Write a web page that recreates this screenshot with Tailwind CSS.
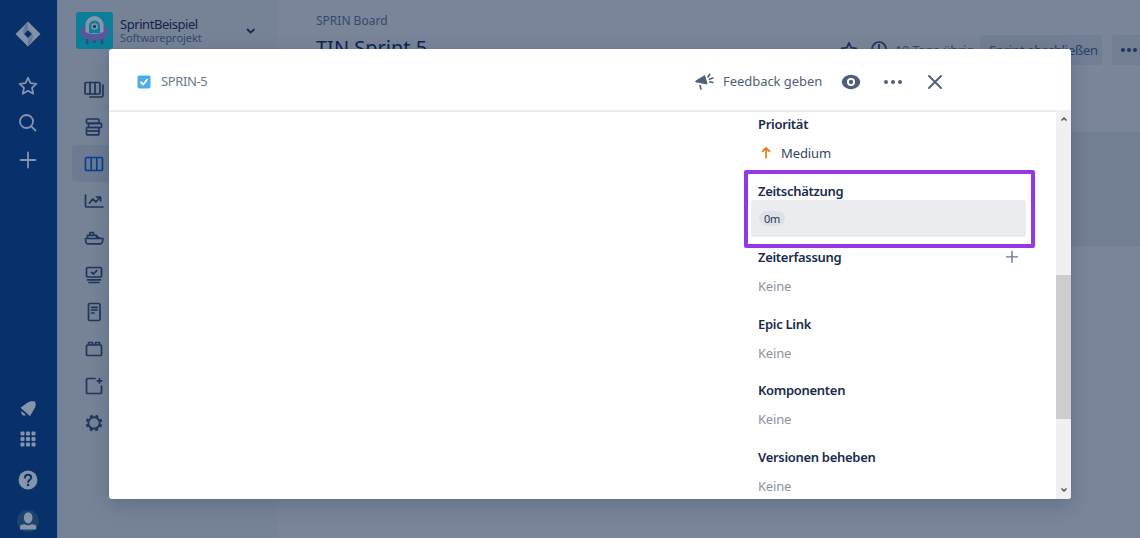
<!DOCTYPE html>
<html lang="de">
<head>
<meta charset="utf-8">
<title>SPRIN-5</title>
<script src="https://cdn.jsdelivr.net/npm/@tailwindcss/browser@4"></script>
</head>
<body class="relative flex h-[538px] w-[1140px] overflow-hidden bg-[#7a8599] font-['Noto_Sans',sans-serif] text-[13px] text-[#34456a]">

<!-- Global navigation -->
<nav class="flex h-full w-[57px] shrink-0 flex-col items-center bg-[#08306b] pr-[2px] text-[#8593ab]">
  <svg class="mt-[21px] h-[26px] w-[26px] shrink-0" viewBox="0 0 26 26"><path d="M13 .5 25.5 13 13 25.5 .5 13Z M13 9 9 13l4 4 4-4Z" fill="#8491a6" fill-rule="evenodd"/><path d="M13 .8v8.2L9 13c-2-3 0-8 4-12.200ZM13 25.200V17l4-4c2 3 0 8-4 12.200Z" fill="#56709a" opacity=".7"/></svg>
  <svg class="mt-[29px] h-5 w-5 shrink-0" viewBox="0 0 20 20" fill="none" stroke="currentColor" stroke-width="1.800" stroke-linejoin="round"><path d="m10 1.800 2.500 5.400 5.800.7-4.300 4 1.200 5.800-5.200-2.900-5.200 2.900 1.200-5.800-4.300-4 5.800-.7Z"/></svg>
  <svg class="mt-[17px] h-5 w-5 shrink-0" viewBox="0 0 20 20" fill="none" stroke="currentColor" stroke-width="1.800" stroke-linecap="round"><circle cx="8.500" cy="8.500" r="6.500"/><path d="m13.300 13.300 4.200 4.200"/></svg>
  <svg class="mt-[17px] h-5 w-5 shrink-0" viewBox="0 0 20 20" fill="none" stroke="currentColor" stroke-width="1.800" stroke-linecap="round"><path d="M10 2.500v15M2.500 10h15"/></svg>
  <svg class="mt-[230px] h-[18px] w-[18px] shrink-0" viewBox="0 0 18 18" fill="currentColor"><path d="M16 1.500c.8 1.500.9 4 .2 5.800L11 16.300 1.500 7.800 8 3C10 1.500 13 .8 16 1.500Z"/><path d="m2.500 11 4.500 4c-1.500 1-3.200.5-4-.6-.8-1-.9-2.300-.5-3.400Z"/></svg>
  <svg class="mt-[12px] h-[18px] w-[18px] shrink-0" viewBox="0 0 18 18" fill="currentColor"><rect x="1.500" y="1.500" width="4" height="4" rx="1"/><rect x="7" y="1.500" width="4" height="4" rx="1"/><rect x="12.500" y="1.500" width="4" height="4" rx="1"/><rect x="1.500" y="7" width="4" height="4" rx="1"/><rect x="7" y="7" width="4" height="4" rx="1"/><rect x="12.500" y="7" width="4" height="4" rx="1"/><rect x="1.500" y="12.500" width="4" height="4" rx="1"/><rect x="7" y="12.500" width="4" height="4" rx="1"/><rect x="12.500" y="12.500" width="4" height="4" rx="1"/></svg>
  <svg class="mt-[21px] h-[22px] w-[22px] shrink-0" viewBox="0 0 22 22"><circle cx="11" cy="11" r="9.500" fill="currentColor"/><path d="M7.900 8.600C8 6.700 9.300 5.700 11 5.700c1.800 0 3.200 1 3.200 2.700 0 2.200-3.100 2.300-3.100 4.700" fill="none" stroke="#08306b" stroke-width="1.900" stroke-linecap="round"/><circle cx="11.100" cy="16" r="1.200" fill="#08306b"/></svg>
  <svg class="mt-[19px] h-[22px] w-[22px] shrink-0" viewBox="0 0 22 22"><circle cx="11" cy="11" r="11" fill="#1c446f"/><ellipse cx="11.200" cy="7.800" rx="4.300" ry="5.600" fill="currentColor"/><path d="M3 19.500v-2.300c0-2 1.800-2.900 4.200-2.900 1.200 0 2.400 1 4 1s2.800-1 4-1c2.400 0 4 .9 4 2.900v2.300Z" fill="currentColor"/></svg>
</nav>

<!-- Project sidebar -->
<aside class="flex h-full w-[222px] shrink-0 flex-col border-l border-[#6d7c93] bg-[#768397]">
  <header class="flex h-[71px] items-start pt-3 pl-[18px]">
    <svg class="h-[37px] w-[37px] shrink-0" viewBox="0 0 37 37"><rect width="37" height="37" rx="3" fill="#0b7f9a"/><path d="M11 26v5.500M18.500 27v3M26 26v5.500" stroke="#3f4584" stroke-width="2.500" stroke-linecap="round"/><ellipse cx="18.500" cy="20" rx="14.500" ry="8.500" fill="#56589c"/><path d="M9.500 20v-7a9 9 0 0 1 18 0v7c-4 2.500-14 2.500-18 0Z" fill="#8995a9"/><path d="M13 21v-7a5.500 5.500 0 0 1 11 0v7Z" fill="#0b7f9a"/><circle cx="18.500" cy="14.500" r="3.300" fill="#8995a9"/><circle cx="18.500" cy="14.500" r="1.700" fill="#26366d"/></svg>
    <div class="ml-[7px] w-[120px] pt-[5px] whitespace-nowrap">
      <div class="h-[14px] text-[13px] leading-[14px] tracking-[-0.45px] text-[#10244b]">SprintBeispiel</div>
      <div class="h-[14px] text-[11px] leading-[14px] tracking-[-0.05px] text-[#34496c]">Softwareprojekt</div>
    </div>
    <svg class="mt-[13px] ml-[5px] h-3 w-3" viewBox="0 0 12 12" fill="none" stroke="#152a50" stroke-width="1.800" stroke-linecap="round" stroke-linejoin="round"><path d="m2.500 4.500 3.200 3.200 3.200-3.200"/></svg>
  </header>
  <ul class="flex flex-col text-[#20365c] [&_svg]:h-6 [&_svg]:w-6 [&_svg]:shrink-0 [&>li]:ml-[14px] [&>li]:flex [&>li]:h-[37px] [&>li]:items-center [&>li]:pl-[10px]">
    <li><svg viewBox="0 0 24 24" fill="none" stroke="currentColor" stroke-width="1.700" stroke-linejoin="round" stroke-linecap="round"><rect x="3" y="4.500" width="15" height="11.500" rx="1"/><path d="M8 4.500V16M13 4.500V16M21 7v10.500a1.500 1.500 0 0 1-1.500 1.500H8"/></svg></li>
    <li><svg viewBox="0 0 24 24" fill="none" stroke="currentColor" stroke-width="1.700" stroke-linejoin="round"><rect x="4.500" y="4" width="12.500" height="4.300" rx=".8"/><rect x="6.500" y="8.300" width="13" height="4.200" rx=".8"/><rect x="4.500" y="12.500" width="12.500" height="7.300" rx=".8"/><path d="M5 16h12"/></svg></li>
    <li class="rounded-l bg-[#6c7b92] text-[#0a3f8f]"><svg viewBox="0 0 24 24" fill="none" stroke="currentColor" stroke-width="1.700" stroke-linejoin="round"><rect x="3.500" y="5.500" width="17" height="13" rx="1"/><path d="M9.200 5.500v13M14.800 5.500v13"/></svg></li>
    <li><svg viewBox="0 0 24 24" fill="none" stroke="currentColor" stroke-width="1.700" stroke-linejoin="round" stroke-linecap="round"><path d="M3.500 6v11a1 1 0 0 0 1 1H21M7.500 14l3.200-4 3.300 3 4-5M14.500 8H18.500v4"/></svg></li>
    <li><svg viewBox="0 0 24 24" fill="none" stroke="currentColor" stroke-width="1.700" stroke-linejoin="round"><path d="M3.500 12.500H21c-.3 3.200-1.200 5.300-2.500 5.300H5.500c-1.200 0-2-2-2-5.300ZM5.500 12.500V9.300h9.200v3.200M8 9.300V6.500h3.500v2.800M14.700 10.200l3.500 2.300"/></svg></li>
    <li><svg viewBox="0 0 24 24" fill="none" stroke="currentColor" stroke-width="1.700" stroke-linejoin="round" stroke-linecap="round"><rect x="4.500" y="4.500" width="15" height="9.500" rx="1"/><path d="m9.500 9.300 2 1.700 3.200-3.300M5.500 16.800h13M7 19.500h10"/></svg></li>
    <li><svg viewBox="0 0 24 24" fill="none" stroke="currentColor" stroke-width="1.700" stroke-linejoin="round" stroke-linecap="round"><rect x="6.500" y="3.500" width="11.500" height="17" rx="1.200"/><path d="M9.500 7.300h5.700M9.500 10h5.700M9.500 13h2.500"/></svg></li>
    <li><svg viewBox="0 0 24 24" fill="none" stroke="currentColor" stroke-width="1.700" stroke-linejoin="round"><rect x="4.500" y="8" width="15" height="10.500" rx="1"/><path d="M6.500 8V5.500h4V8M13.500 8V5.500h4V8"/></svg></li>
    <li><svg viewBox="0 0 24 24" fill="none" stroke="currentColor" stroke-width="1.700" stroke-linejoin="round" stroke-linecap="round"><path d="M13 4.500H5.500a1 1 0 0 0-1 1v13a1 1 0 0 0 1 1H18.500a1 1 0 0 0 1-1V12M17.500 4.500v4.500M15.200 6.800h4.600"/></svg></li>
    <li><svg viewBox="0 0 24 24" fill="none" stroke="currentColor"><circle cx="12" cy="12" r="5.700" stroke-width="1.900"/><circle cx="12" cy="12" r="7.300" stroke-width="2.200" stroke-dasharray="2.900 2.833" transform="rotate(11 12 12)"/></svg></li>
  </ul>
</aside>

<!-- Board -->
<main class="flex min-w-0 flex-1 flex-col">
  <div class="h-[34px] pt-3 pl-[37px] text-[12px] leading-[18px] text-[#34496c]">SPRIN Board</div>
  <div class="flex h-[98px] items-start whitespace-nowrap pl-[37px]">
    <h1 class="w-[524px] text-[20px] leading-[28px] text-[#0c2551]">TIN Sprint 5</h1>
    <svg class="mt-[7px] h-[18px] w-[18px]" viewBox="0 0 20 20" fill="none" stroke="#20365c" stroke-width="2" stroke-linejoin="round"><path d="m10 2 2.400 5.400 5.600.7-4.200 4 1.200 5.800-5-2.900-5 2.900 1.200-5.800-4.200-4 5.600-.7Z"/></svg>
    <svg class="mt-[7px] ml-[13px] h-4 w-4" viewBox="0 0 16 16" fill="none" stroke="#20365c" stroke-width="1.700"><circle cx="8" cy="8" r="7"/><path d="M8 3v6"/></svg>
    <span class="mt-[6px] ml-[8px] w-[85px] tracking-[-0.35px] leading-5 text-[#34496c]">10 Tage übrig</span>
    <span class="mt-px h-[30px] w-[122px] rounded-[3px] bg-[#717e94] pl-[9px] leading-[30px] tracking-[-0.25px] text-[#2b4065]">Sprint abschließen</span>
    <span class="mt-px ml-[10px] flex h-[30px] w-[28px] items-center gap-[2px] rounded-l-[3px] bg-[#717e94] pl-[9px]"><i class="h-1 w-1 rounded-full bg-[#20365c]"></i><i class="h-1 w-1 rounded-full bg-[#20365c]"></i><i class="h-1 w-1 rounded-full bg-[#20365c]"></i></span>
  </div>
  <div class="ml-[37px] h-[114px] bg-[#727f93]"></div>
</main>

<!-- Issue dialog -->
<section class="absolute top-[49px] left-[109px] flex h-[450px] w-[962px] flex-col overflow-hidden rounded-[3px] bg-white shadow-[0_0_1px_rgba(9,30,66,0.35),0_6px_20px_rgba(9,30,66,0.2)]">
  <header class="flex h-[63px] shrink-0 items-center border-b-2 border-[#ebecf0] pt-[5px] pl-[28px] whitespace-nowrap text-[#505f79]">
    <svg class="h-[14px] w-[14px]" viewBox="0 0 14 14"><rect x=".5" y=".5" width="13" height="13" rx="1.800" fill="#4bade8"/><path d="m4 7.300 2.200 2.200L10 4.700" fill="none" stroke="#fff" stroke-width="1.800" stroke-linecap="round" stroke-linejoin="round"/></svg>
    <span class="ml-[10px] w-[533px] text-[13px] tracking-[-0.4px] text-[#6b778c]">SPRIN-5</span>
    <svg class="h-[18px] w-[20px]" viewBox="0 0 20 18" fill="#505f79" stroke="#505f79" stroke-linecap="round"><path d="M10.800 3 13 11 2 8.800c-.6-.2-.6-.7 0-1Z" stroke-linejoin="round"/><path d="m6 12.500 1 3.500M14 4l1.800-2.700M15.500 6.300l3.300-1.200M15.800 8.700l3 .8" fill="none" stroke-width="1.600"/></svg>
    <span class="ml-[9px] w-[118px] tracking-[-0.05px]">Feedback geben</span>
    <svg class="h-[18px] w-[20px]" viewBox="0 0 20 18"><path d="M10 1.800c5 0 9.200 3.700 9.200 7.200S15 16.200 10 16.200.8 12.500.8 9 5 1.800 10 1.800Z" fill="#505f79"/><circle cx="10" cy="9" r="3.100" fill="#505f79" stroke="#fff" stroke-width="1.900"/></svg>
    <span class="ml-[23px] flex w-[43px] gap-[3px]"><i class="h-1 w-1 rounded-full bg-[#505f79]"></i><i class="h-1 w-1 rounded-full bg-[#505f79]"></i><i class="h-1 w-1 rounded-full bg-[#505f79]"></i></span>
    <svg class="h-4 w-4" viewBox="0 0 16 16" fill="none" stroke="#505f79" stroke-width="1.900" stroke-linecap="round"><path d="m2 2 12 12M14 2 2 14"/></svg>
  </header>
  <div class="flex min-h-0 flex-1">
    <div class="flex-1"></div>
    <dl class="flex w-[298px] flex-col leading-[18px] whitespace-nowrap text-[#172b4d] [&_dt]:h-[18px] [&_dt]:font-semibold">
      <div class="h-[58px] pt-[3px]">
        <dt class="tracking-[-0.3px]">Priorität</dt>
        <dd class="mt-[11px] flex items-center tracking-[-0.1px] text-[#344563]"><svg class="mr-[7px] h-4 w-4" viewBox="0 0 16 16" fill="none" stroke="#ea7d24" stroke-width="1.800" stroke-linecap="round" stroke-linejoin="round"><path d="M8 12.500V3M4.500 6.300 8 2.800l3.500 3.500"/></svg>Medium</dd>
      </div>
      <div class="ml-[-14px] h-[78px] w-[291px] rounded-[2px] border-4 border-[#9438e4] pt-[8px] pl-[3px]">
        <dt class="pl-[7px] tracking-[-0.3px]">Zeitschätzung</dt>
        <dd class="flex h-[37px] w-[275px] items-center rounded-[3px] bg-[#ebecf0] pl-[8px]"><span class="h-[15px] w-[26px] rounded-full bg-[#dfe1e6] text-center text-[11px] leading-[15px] tracking-[-0.3px] text-[#253858]">0m</span></dd>
      </div>
      <div class="h-[67px]">
        <dt class="flex w-[261px] items-center justify-between tracking-[-0.3px]">Zeiterfassung<svg class="h-[14px] w-[14px]" viewBox="0 0 14 14" fill="none" stroke="#6b778c" stroke-width="1.400" stroke-linecap="round"><path d="M7 1.500v10.800M1.600 6.900h10.800"/></svg></dt>
        <dd class="mt-[11px] tracking-[-0.2px] text-[#8993a4]">Keine</dd>
      </div>
      <div class="h-[66px]"><dt class="tracking-[-0.3px]">Epic Link</dt><dd class="mt-[11px] tracking-[-0.2px] text-[#8993a4]">Keine</dd></div>
      <div class="h-[67px]"><dt class="tracking-[-0.3px]">Komponenten</dt><dd class="mt-[11px] tracking-[-0.2px] text-[#8993a4]">Keine</dd></div>
      <div><dt class="tracking-[-0.3px]">Versionen beheben</dt><dd class="mt-[11px] tracking-[-0.2px] text-[#8993a4]">Keine</dd></div>
    </dl>
    <div class="mt-[-2px] flex w-[15px] flex-col items-center bg-[#f0f0f0]">
      <svg class="mt-[5px] h-2 w-2 shrink-0" viewBox="0 0 8 8" fill="none" stroke="#505050" stroke-width="1.500"><path d="M1.500 5.500 4 3l2.500 2.500"/></svg>
      <div class="mt-[152px] h-[144px] w-full bg-[#cdcdcd]"></div>
      <svg class="mt-auto mb-[5px] h-2 w-2 shrink-0" viewBox="0 0 8 8" fill="none" stroke="#505050" stroke-width="1.500"><path d="M1.500 2.500 4 5l2.500-2.500"/></svg>
    </div>
  </div>
</section>
</body>
</html>
